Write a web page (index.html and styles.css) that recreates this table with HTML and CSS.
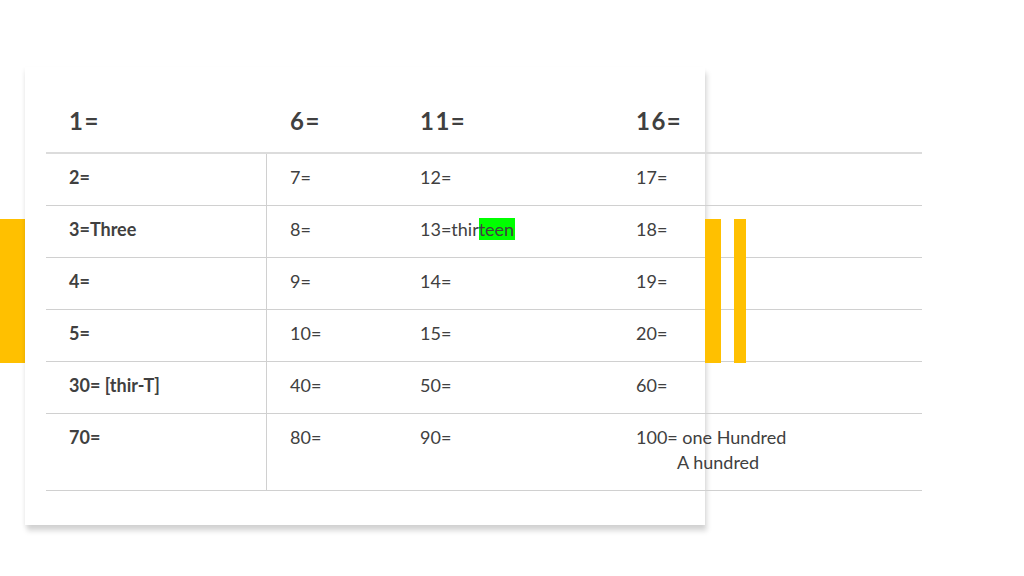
FILE: index.html
```html
<!DOCTYPE html>
<html>
<head>
<meta charset="utf-8">
<link rel="stylesheet" href="styles.css">
</head>
<body>
<div class="slide">
  <div class="accent accent-left"></div>
  <div class="card">
    <div class="table">
      <div class="cell head">1=</div>
      <div class="cell head">6=</div>
      <div class="cell head">11=</div>
      <div class="cell head">16=</div>

      <div class="cell first">2=</div>
      <div class="cell">7=</div>
      <div class="cell">12=</div>
      <div class="cell">17=</div>

      <div class="cell first">3=Three</div>
      <div class="cell">8=</div>
      <div class="cell">13=thir<span class="hl">teen</span></div>
      <div class="cell">18=</div>

      <div class="cell first">4=</div>
      <div class="cell">9=</div>
      <div class="cell">14=</div>
      <div class="cell">19=</div>

      <div class="cell first">5=</div>
      <div class="cell">10=</div>
      <div class="cell">15=</div>
      <div class="cell">20=</div>

      <div class="cell first">30= [thir-T]</div>
      <div class="cell">40=</div>
      <div class="cell">50=</div>
      <div class="cell">60=</div>

      <div class="cell first last">70=</div>
      <div class="cell last">80=</div>
      <div class="cell last">90=</div>
      <div class="cell last">100= one Hundred<span class="indent">A hundred</span></div>
    </div>
  </div>
  <div class="accent accent-r1"></div>
  <div class="accent accent-r2"></div>
</div>
</body>
</html>
```
FILE: styles.css
```css
html, body {
  margin: 0;
  padding: 0;
  background: #ffffff;
}

.slide {
  position: relative;
  width: 1024px;
  height: 576px;
  overflow: hidden;
  background: #ffffff;
  font-family: Lato, "Open Sans", "Liberation Sans", sans-serif;
  color: #404040;
  padding-top: 67px;
  box-sizing: border-box;
}

.card {
  position: relative;
  z-index: 1;
  margin-left: 25px;
  width: 680px;
  height: 458px;
  background: #ffffff;
  box-shadow: 2px 6px 5px rgba(0, 0, 0, 0.15), -1px 2px 4px rgba(0, 0, 0, 0.05);
}

.table {
  margin-left: 21px;
  width: 876px;
  display: grid;
  grid-template-columns: 221px 130px 216px 309px;
}

.cell {
  box-sizing: border-box;
  height: 52px;
  padding: 11px 0 0 23px;
  font-size: 18px;
  line-height: 25px;
  border-bottom: 1px solid #d0d0d0;
  white-space: nowrap;
}

.cell.head {
  height: 87px;
  padding-top: 39px;
  font-size: 24px;
  line-height: 30px;
  font-weight: 700;
  letter-spacing: 1.5px;
  border-bottom: 2px solid #dcdcdc;
}

.cell.first {
  font-weight: 700;
  border-right: 1px solid #d0d0d0;
}

.cell.last {
  height: 77px;
}

.hl {
  background: #00ff00;
  padding-right: 1px;
}

.indent {
  display: block;
  padding-left: 41px;
}

.accent {
  position: absolute;
  top: 219px;
  height: 144px;
  background: #ffc000;
}

.accent-left {
  left: 0;
  width: 25px;
  z-index: 0;
}

.accent-r1 {
  left: 705px;
  width: 16px;
  z-index: 2;
}

.accent-r2 {
  left: 734px;
  width: 12px;
  z-index: 2;
}
```
